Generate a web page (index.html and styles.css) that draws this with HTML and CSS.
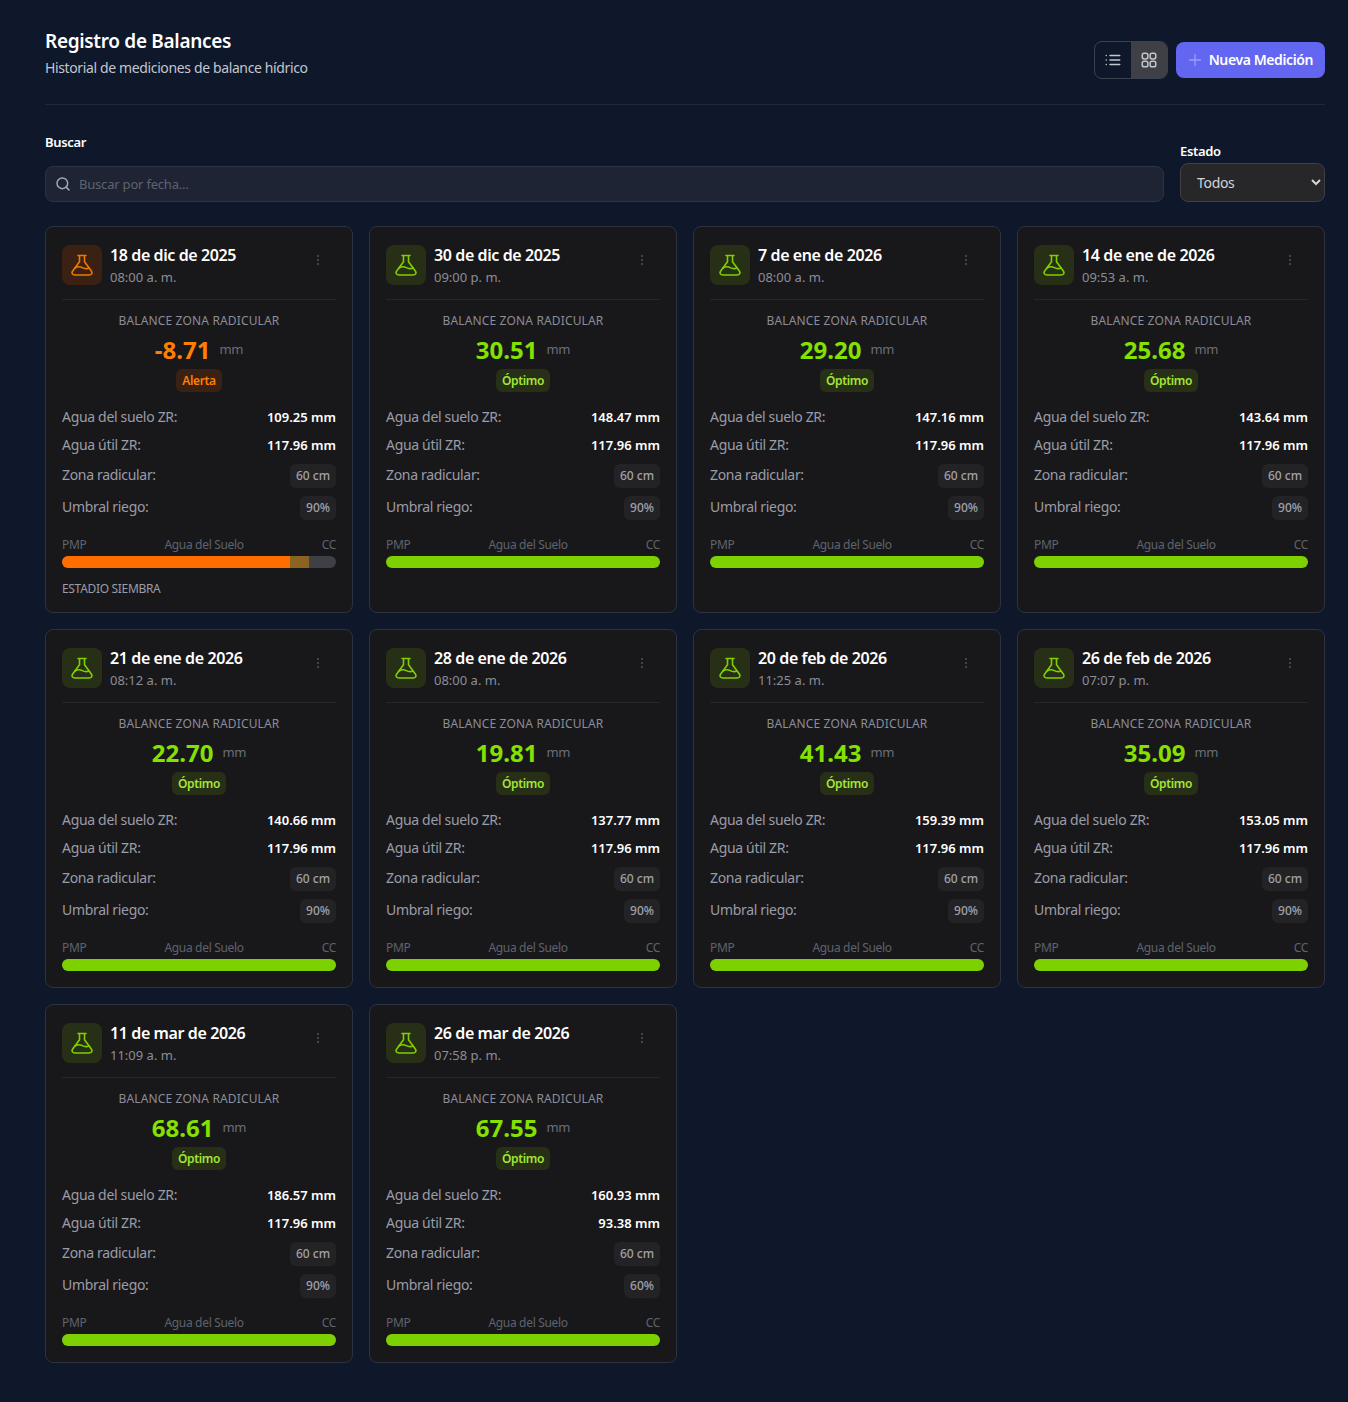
FILE: index.html
```html
<!DOCTYPE html>
<html lang="es">
  <head>
    <meta charset="UTF-8" />
    <title>Registro de Balances</title>
    <link rel="stylesheet" href="styles.css">
  </head>
  <body>
    <svg class="defs" width="0" height="0">
      <symbol id="flask" viewBox="0 0 24 24">
        <path d="M8 2.500h8M9.500 2.500v6.300L2.500 18.200C1.200 20.200 2.600 22 5 22h14c2.400 0 3.800-1.800 2.500-3.800l-7-9.400V2.500" fill="none" stroke="currentColor" stroke-width="1.600" stroke-linecap="round" stroke-linejoin="round"/>
        <path d="M5 15c2.500-1.600 5-1.600 7.300-.4s4.500 1.300 6.700.4" fill="none" stroke="currentColor" stroke-width="1.600" stroke-linecap="round"/>
      </symbol>
    </svg>

    <div class="page">
      <header class="top">
        <div>
          <h1>Registro de Balances</h1>
          <p class="sub">Historial de mediciones de balance hídrico</p>
        </div>
        <div class="actions">
          <div class="toggle">
            <button class="toggle-btn">
              <svg width="18" height="18" viewBox="0 0 24 24" fill="none" stroke="currentColor" stroke-width="2" stroke-linecap="round"><path d="M8 6h13M8 12h13M8 18h13M3 6h.01M3 12h.01M3 18h.01"/></svg>
            </button>
            <button class="toggle-btn active">
              <svg width="18" height="18" viewBox="0 0 24 24" fill="none" stroke="currentColor" stroke-width="2"><rect x="3" y="3" width="7.500" height="7.500" rx="2.500"/><rect x="13.500" y="3" width="7.500" height="7.500" rx="2.500"/><rect x="3" y="13.500" width="7.500" height="7.500" rx="2.500"/><rect x="13.500" y="13.500" width="7.500" height="7.500" rx="2.500"/></svg>
            </button>
          </div>
          <button class="btn-new">
            <svg width="14" height="14" viewBox="0 0 14 14" fill="none" stroke="#9a9cff" stroke-width="1.300" stroke-linecap="round"><path d="M7 1.500v11M1.500 7h11"/></svg>
            Nueva Medición
          </button>
        </div>
      </header>

      <section class="filters">
        <div class="field grow">
          <label>Buscar</label>
          <div class="search">
            <svg width="16" height="16" viewBox="0 0 24 24" fill="none" stroke="#a3a9b5" stroke-width="2.200" stroke-linecap="round"><circle cx="11" cy="11" r="8"/><path d="m21 21-4.300-4.300"/></svg>
            <input type="text" placeholder="Buscar por fecha..." />
          </div>
        </div>
        <div class="field state">
          <label>Estado</label>
          <select><option>Todos</option></select>
        </div>
      </section>

      <main class="grid" id="grid"></main>
    </div>

    <script src="app.js"></script>
  </body>
</html>
```

FILE: styles.css
```css
* {
  box-sizing: border-box;
}

body {
  margin: 0;
  background-color: #0f172a;
  font-family: "Noto Sans", sans-serif;
  letter-spacing: -0.02em;
  color: #fff;
}

.defs {
  position: absolute;
}

.page {
  width: 1280px;
  margin-left: 45px;
  padding: 29px 0 40px;
}

.top {
  display: flex;
  justify-content: space-between;
  height: 76px;
  padding-bottom: 14px;
  border-bottom: 1px solid #1e293b;
}

h1 {
  margin: 0;
  font-size: 19px;
  line-height: 24px;
  font-weight: 600;
}

.sub {
  margin: 5px 0 0;
  font-size: 14px;
  line-height: 20px;
  letter-spacing: -0.37px;
  color: #c2c6cf;
}

.actions {
  display: flex;
  align-items: center;
  gap: 8px;
}

.toggle {
  display: flex;
  height: 38px;
  border: 1px solid #3a4150;
  border-radius: 8px;
  overflow: hidden;
}

.toggle-btn {
  display: flex;
  align-items: center;
  justify-content: center;
  width: 36px;
  padding: 0;
  border: none;
  background: transparent;
  color: #c2c6cf;
}

.toggle-btn.active {
  background: #3f3f46;
}

.btn-new {
  display: flex;
  align-items: center;
  gap: 7px;
  height: 36px;
  padding: 0 12px;
  border: none;
  border-radius: 8px;
  background: #6366f1;
  color: #fff;
  font-family: inherit;
  font-size: 14px;
  font-weight: 600;
  letter-spacing: -0.4px;
}

.filters {
  display: flex;
  align-items: flex-end;
  gap: 16px;
  margin-top: 27.500px;
}

.field label {
  display: block;
  font-size: 13px;
  line-height: 18px;
  font-weight: 600;
}

.grow {
  flex: 1;
}

.grow label {
  margin-bottom: 15px;
}

.state label {
  margin-bottom: 3px;
}

.search {
  display: flex;
  align-items: center;
  gap: 6px;
  height: 36px;
  padding: 0 9px;
  border: 1px solid #2b3443;
  border-radius: 8px;
  background: #1e2433;
}

.search input {
  flex: 1;
  border: none;
  outline: none;
  background: transparent;
  font-family: inherit;
  font-size: 13px;
  letter-spacing: -0.2px;
}

.search input::placeholder {
  color: #5f636e;
}

.state {
  width: 145px;
}

.state select {
  display: block;
  width: 100%;
  height: 39px;
  padding: 0 12px;
  border: 1px solid #3f3f46;
  border-radius: 8px;
  background: #27272a;
  color: #d4d4d8;
  font-family: inherit;
  font-size: 14px;
  letter-spacing: inherit;
}

.grid {
  display: grid;
  grid-template-columns: repeat(4, 308px);
  gap: 16px;
  margin-top: 24px;
}

.card {
  padding: 18px 16px 0;
  border: 1px solid #2d3240;
  border-radius: 8px;
  background: #18181b;
}

.card-head {
  display: flex;
  align-items: flex-start;
  gap: 8px;
  height: 55px;
  border-bottom: 1px solid #27272a;
}

.icon-box {
  display: flex;
  align-items: center;
  justify-content: center;
  width: 40px;
  height: 40px;
  border-radius: 8px;
  background: #272f16;
  color: #80d000;
}

.alert .icon-box {
  background: #3a2114;
  color: #f07a00;
}

.date {
  font-size: 16px;
  line-height: 20px;
  font-weight: 600;
  letter-spacing: -0.4px;
}

.time {
  margin-top: 2px;
  font-size: 13px;
  line-height: 20px;
  letter-spacing: 0;
  color: #8b8d98;
}

.dots {
  margin: 8px 16px 0 auto;
  color: #52525b;
}

.balance {
  display: flex;
  flex-direction: column;
  align-items: center;
  padding-top: 13px;
}

.balance-title {
  font-size: 12px;
  line-height: 16px;
  letter-spacing: 0.15px;
  color: #8b8d98;
}

.balance-value {
  display: flex;
  align-items: baseline;
  gap: 9px;
  margin-top: 5px;
  height: 32px;
}

.num {
  font-size: 24px;
  line-height: 32px;
  font-weight: 700;
  letter-spacing: 0;
  color: #84e100;
}

.mm {
  position: relative;
  top: -5px;
  font-size: 13px;
  color: #6b6e79;
}

.alert .num {
  color: #ff8000;
}

.badge {
  margin-top: 3px;
  padding: 0 6px;
  height: 23px;
  border-radius: 6px;
  background: #272f16;
  color: #a3e635;
  font-size: 12px;
  line-height: 23px;
  font-weight: 600;
}

.alert .badge {
  background: #3a2114;
  color: #ff8000;
}

.rows {
  margin-top: 11px;
}

.row {
  display: flex;
  justify-content: space-between;
  align-items: center;
  height: 28px;
  font-size: 14px;
  color: #9a9ca6;
}

.row.tall {
  height: 32px;
}

.row b {
  color: #fff;
  font-size: 13px;
  font-weight: 600;
  letter-spacing: 0;
}

.pill {
  margin-top: 2px;
  padding: 0 6px;
  height: 24px;
  border-radius: 6px;
  background: #232326;
  color: #a1a1aa;
  font-size: 12px;
  line-height: 24px;
  font-weight: 500;
  letter-spacing: 0;
}

.bar-labels {
  display: flex;
  justify-content: space-between;
  margin-top: 14px;
  font-size: 12px;
  line-height: 16px;
  color: #5f636e;
}

.bar {
  display: flex;
  height: 12px;
  margin-top: 3px;
  margin-bottom: 16px;
  border-radius: 6px;
  background: #3f3f46;
  overflow: hidden;
}

.bar-main {
  background: #7ed100;
}

.bar-extra {
  background: #8a6420;
}

.alert .bar-main {
  background: #ff6d00;
}

.stage {
  margin-top: -3px;
  padding-bottom: 15px;
  font-size: 12px;
  line-height: 16px;
  color: #9a9ca6;
}
```

FILE: app.js
```js
const records = [
  ["18 de dic de 2025", "08:00 a. m.", "-8.71", "109.25", "117.96", "90%"],
  ["30 de dic de 2025", "09:00 p. m.", "30.51", "148.47", "117.96", "90%"],
  ["7 de ene de 2026", "08:00 a. m.", "29.20", "147.16", "117.96", "90%"],
  ["14 de ene de 2026", "09:53 a. m.", "25.68", "143.64", "117.96", "90%"],
  ["21 de ene de 2026", "08:12 a. m.", "22.70", "140.66", "117.96", "90%"],
  ["28 de ene de 2026", "08:00 a. m.", "19.81", "137.77", "117.96", "90%"],
  ["20 de feb de 2026", "11:25 a. m.", "41.43", "159.39", "117.96", "90%"],
  ["26 de feb de 2026", "07:07 p. m.", "35.09", "153.05", "117.96", "90%"],
  ["11 de mar de 2026", "11:09 a. m.", "68.61", "186.57", "117.96", "90%"],
  ["26 de mar de 2026", "07:58 p. m.", "67.55", "160.93", "93.38", "60%"],
];

const grid = document.getElementById("grid");

records.forEach(([date, time, value, soil, useful, threshold]) => {
  const isAlert = parseFloat(value) < 0;
  const card = document.createElement("article");
  card.className = isAlert ? "card alert" : "card";
  card.innerHTML = `
    <div class="card-head">
      <div class="icon-box"><svg width="24" height="24"><use href="#flask"/></svg></div>
      <div>
        <div class="date">${date}</div>
        <div class="time">${time}</div>
      </div>
      <svg class="dots" width="4" height="14" viewBox="0 0 4 14" fill="currentColor"><circle cx="2" cy="3" r="1"/><circle cx="2" cy="7" r="1"/><circle cx="2" cy="11" r="1"/></svg>
    </div>
    <div class="balance">
      <div class="balance-title">BALANCE ZONA RADICULAR</div>
      <div class="balance-value"><span class="num">${value}</span><span class="mm">mm</span></div>
      <div class="badge">${isAlert ? "Alerta" : "Óptimo"}</div>
    </div>
    <div class="rows">
      <div class="row"><span>Agua del suelo ZR:</span><b>${soil} mm</b></div>
      <div class="row"><span>Agua útil ZR:</span><b>${useful} mm</b></div>
      <div class="row tall"><span>Zona radicular:</span><span class="pill">60 cm</span></div>
      <div class="row tall"><span>Umbral riego:</span><span class="pill">${threshold}</span></div>
    </div>
    <div class="bar-labels"><span>PMP</span><span>Agua del Suelo</span><span>CC</span></div>
    <div class="bar">
      ${isAlert
        ? '<div class="bar-main" style="width: 83.300%"></div><div class="bar-extra" style="width: 7%"></div>'
        : '<div class="bar-main" style="width: 100%"></div>'}
    </div>
    ${isAlert ? '<div class="stage">ESTADIO SIEMBRA</div>' : ""}
  `;
  grid.appendChild(card);
});
```
